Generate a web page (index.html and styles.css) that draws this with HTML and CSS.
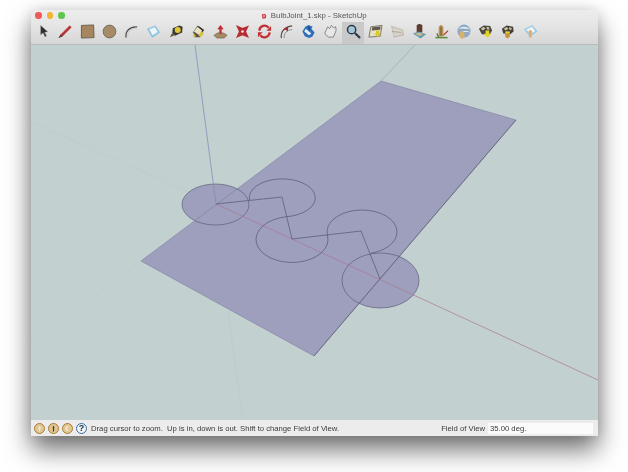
FILE: index.html
```html
<!DOCTYPE html>
<html lang="en">
<head>
<meta charset="utf-8">
<title>BulbJoint_1.skp - SketchUp</title>
<link rel="stylesheet" href="styles.css">
</head>
<body>
<main class="window">
  <header class="chrome">
    <div class="titlebar">
      <div class="lights"><span class="light red"></span><span class="light yellow"></span><span class="light green"></span></div>
      <div class="title">
        <svg class="docicon" viewBox="0 0 8 8"><path d="M1 2 5 1 7 3 6.5 7 2 7.5Z" fill="#d2404a"/><path d="M3 3h2v2H3Z" fill="#f3c9c9"/></svg>
        <span>BulbJoint_1.skp - SketchUp</span>
      </div>
    </div>
    <div class="toolbar">
      <span class="tool"><svg viewBox="0 0 16 16"><path d="M5 1.5v10l2.6-2.2 2 4.2 1.6-.8-2-4 3.2-.4Z" fill="#2b2b30" stroke="#888" stroke-width=".5"/></svg></span>
      <span class="tool"><svg viewBox="0 0 16 16"><path d="M0.5 15 3 11 12.5 1.5l2 2L5 13Z" fill="#b5323a"/><path d="M.5 15 3 11l2 2Z" fill="#50403a"/><path d="M3 11 12.5 1.5" stroke="#e58a8a" stroke-width=".8"/></svg></span>
      <span class="tool"><svg viewBox="0 0 16 16"><path d="M1.5 1.5 14.5 1 15 14.5 1.5 15Z" fill="#a5865f" stroke="#5f5648" stroke-width=".9"/></svg></span>
      <span class="tool"><svg viewBox="0 0 16 16"><circle cx="8" cy="8" r="6.8" fill="#a78b66" stroke="#6b6254" stroke-width=".9"/></svg></span>
      <span class="tool"><svg viewBox="0 0 16 16"><path d="M2.2 14.5C1 8 6 2.5 14 3" fill="none" stroke="#4d4d4f" stroke-width="1.3"/><path d="M4 13C3.5 8.5 7 4.4 14 4.4" fill="none" stroke="#c8c8c8" stroke-width="1"/></svg></span>
      <span class="tool"><svg viewBox="0 0 16 16"><path d="M1 5 10 1.5 15 9 6.5 15Z" fill="#8fc4e0"/><path d="M3.5 5.6 9.5 3.5 12.5 8.5 7 12Z" fill="#eef6fa"/></svg></span>
      <span class="tool"><svg viewBox="0 0 16 16"><path d="M1 14 3 10 6 12Z" fill="#6a5a30"/><path d="M4 4.5 11 1.5 14.5 3 14 9 6.5 12.5 3.5 10Z" fill="#3a3a34"/><circle cx="9.3" cy="6.3" r="3.2" fill="#e5c53a"/></svg></span>
      <span class="tool"><svg viewBox="0 0 16 16"><path d="M2 9 7 1.5 14 6 10 14 4 14Z" fill="#57534a"/><path d="M3 8 7 3 12 6.5 9 12Z" fill="#e8e2bf"/><path d="M2 8.5 5.5 13 2.5 13.5Z" fill="#d8c42f"/><path d="M8 3 13 7" stroke="#2b2b2b" stroke-width="1.3"/><path d="M8 12 11 8 14 10 10 14Z" fill="#d9c538"/></svg></span>
      <span class="tool"><svg viewBox="0 0 16 16"><path d="M1 12 5 9.5h6L15 12 12 15H4Z" fill="#a58a66" stroke="#5e5244" stroke-width=".6"/><path d="M8 1 4.6 5.6H6.8V10.5H9.2V5.6H11.4Z" fill="#c42b2f"/></svg></span>
      <span class="tool"><svg viewBox="0 0 16 16"><path d="M1 1 7.5 4 8.5 4 15 1.5 12 7.5V8.5L15 15 8.5 12.2H7.5L1 15 4 8.5V7.5Z" fill="#b72a32"/><circle cx="8" cy="8" r="1.4" fill="#e8e8e8"/></svg></span>
      <span class="tool"><svg viewBox="0 0 16 16"><path d="M2.5 7A5.6 5.6 0 0 1 12.5 4" fill="none" stroke="#c42f34" stroke-width="2.4"/><path d="M13.5 9A5.6 5.6 0 0 1 3.5 12" fill="none" stroke="#c42f34" stroke-width="2.4"/><path d="M15 2v5.2H10ZM1 14V8.8H6Z" fill="#c42f34"/></svg></span>
      <span class="tool"><svg viewBox="0 0 16 16"><path d="M2.5 15C1.5 8 6 3 14 2" fill="none" stroke="#4a4a4a" stroke-width="1.2"/><path d="M5.5 15C5 10 8 6.5 14 6" fill="none" stroke="#8a8a8a" stroke-width="1"/><path d="M3.5 7 10 2.5 9.5 8 7 6.2Z" fill="#ad2a32"/></svg></span>
      <span class="tool"><svg viewBox="0 0 16 16"><path d="M8 1 12.5 3 11 5 14.5 9 12 13.5 8.5 15 4 13 1.5 8 4.5 3Z" fill="#2e6fb8"/><path d="M5 5 11 10 8.5 12 3.5 8Z" fill="#e9eef2"/><path d="M8 3 9.5 6" stroke="#1d3f6e" stroke-width="1.2"/></svg></span>
      <span class="tool"><svg viewBox="0 0 16 16"><path d="M2 9.5 5 3 7 5 9 1.5 11 4 13.5 3 14 7 11 14H6L2.5 11Z" fill="#e7e7e5" stroke="#77777a" stroke-width=".9"/></svg></span>
      <span class="tool active"><svg viewBox="0 0 16 16"><circle cx="6" cy="6" r="4.4" fill="#a7c5d8" stroke="#2b3a48" stroke-width="1.6"/><path d="M9.5 9.5 15 15" stroke="#2b3a48" stroke-width="2.3"/></svg></span>
      <span class="tool"><svg viewBox="0 0 16 16"><path d="M3 3 15 1.5 13 13 1 14Z" fill="#e6e0c4" stroke="#6b6555" stroke-width=".9"/><path d="M4.5 3.5 13.5 2.6 13 6 4 6.8Z" fill="#5d5a52"/><path d="M8.5 7h3.5v3h2L10.2 14 6.7 10h1.8Z" fill="#d8cb2c"/></svg></span>
      <span class="tool"><svg viewBox="0 0 16 16"><path d="M1 1.5 14 6 15 12 4 15Z" fill="#c4bcb0"/><path d="M2.5 3.5 13 7 13 11 4.5 13Z" fill="#d8d3cb"/><path d="M2 8 12 9" stroke="#aaa397" stroke-width="1"/></svg></span>
      <span class="tool"><svg viewBox="0 0 16 16"><path d="M5 1h6v8H5Z" fill="#5f3c2d"/><path d="M5 1 8 0 11 1" fill="#3f2a20"/><path d="M1 10 7 8 15 11 9 15.5Z" fill="#5d9ab0"/><path d="M3 10.5 8 9 12 11 8 13Z" fill="#c9b98a"/></svg></span>
      <span class="tool"><svg viewBox="0 0 16 16"><path d="M5 3 7.5 .8 10 3V13H5Z" fill="#b89358"/><path d="M7.5 3V13" stroke="#7d5b33" stroke-width="1.2"/><path d="M1.5 14.5h13" stroke="#5b8a3a" stroke-width="1.6"/><path d="M10 12 15 7" stroke="#b03a32" stroke-width="1.2"/><path d="M3 10 5 14" stroke="#48702f" stroke-width="1.2"/></svg></span>
      <span class="tool"><svg viewBox="0 0 16 16"><circle cx="8.5" cy="7.5" r="7" fill="#8ea9c8"/><path d="M2.5 5C6 2 11 2 15 5.5 11 4.5 6 4.5 2.5 5ZM5 9C8 7 12 7 15 9 11 8.5 8 8.5 5 9Z" fill="#e6edf2"/><path d="M4 8h5v6l-2.5 2L4 14Z" fill="#d8b06c"/></svg></span>
      <span class="tool"><svg viewBox="0 0 16 16"><path d="M1 5 6 1.5 13 2 15 7 12 12 4 11Z" fill="#49463f"/><path d="M3 5 6 3 8 5 5 7ZM9 3 12 3.5 12 6 9.5 5.5Z" fill="#c9c0a5"/><path d="M8 7h4v3.5h2.4L10 15 5.6 10.5H8Z" fill="#e2d42e"/></svg></span>
      <span class="tool"><svg viewBox="0 0 16 16"><path d="M2 5 7 1.5 14 3 14.5 8 11 11 3.5 10Z" fill="#45423b"/><path d="M4 5 7 3.2 9 5 6 7ZM9.5 3.5 12.5 4.2 12 6.5 10 6Z" fill="#c9c0a5"/><path d="M5.5 8h5v5.5L8 15.5 5.5 13.5Z" fill="#c9923e"/><path d="M6 8h4v2H6Z" fill="#e2d42e"/></svg></span>
      <span class="tool"><svg viewBox="0 0 16 16"><path d="M1 5.5 10 1 15.5 8 7 13.5Z" fill="#9acae4"/><path d="M3.5 5.8 9.5 3 13 7.6 7.5 11Z" fill="#f0f6fa"/><path d="M5 9 7.8 5.8 10.6 9H9.2V14.5H6.4V9Z" fill="#d9b070"/></svg></span>
    </div>
  </header>
  <svg class="canvas" viewBox="31 45 567 375" role="img" aria-label="Model viewport">
    <g class="scene">
      <path class="axis-faint red" d="M31 122 216 204"/>
      <path class="axis-faint green" d="M31 343 141 261"/>
      <path class="axis-faint blue" d="M228 312 243 420"/>
      <path class="axis green" d="M381 81 415 45"/>
      <path class="plane" d="M381 81 516 120 314 356 141 261Z"/>
      <ellipse class="bulb" cx="215.5" cy="204.5" rx="33.5" ry="20.5"/>
      <ellipse class="bulb" cx="380.5" cy="280.5" rx="38.5" ry="27.5"/>
      <path class="edge" d="M141 261 381 81 516 120 314 356Z"/>
      <path class="axis blue" d="M195 45 216 204"/>
      <path class="axis red" d="M216 204 598 380"/>
      <path class="curve" d="M249.5 200A33 19 0 1 1 286.7 216.7"/>
      <path class="curve" d="M286.7 216.7A36 23 0 1 0 327.6 236"/>
      <path class="curve" d="M327.6 236A35 22 0 1 1 370.7 253.3"/>
      <path class="curve" d="M216 204 282 197 292 239 361 231 380 279"/>
      <path class="curve" d="M314 356 516 120"/>
    </g>
  </svg>
  <footer class="statusbar">
    <div class="badges">
      <span class="badge orange"><svg viewBox="0 0 12 12"><path d="M6 2.5 8 5 6.8 7V9.5H5.2V7L4 5Z" fill="#f6e6c6"/></svg></span>
      <span class="badge orange"><svg viewBox="0 0 12 12"><path d="M6 2 7.5 5H6.8V10H5.2V5H4.5Z" fill="#4a3a20"/></svg></span>
      <span class="badge orange"><svg viewBox="0 0 12 12"><path d="M7.5 2.5A3.6 3.6 0 1 0 7.5 9.5 4.5 4.5 0 0 1 7.5 2.5Z" fill="#f6e6c6"/></svg></span>
      <span class="badge help">?</span>
    </div>
    <span class="hint">Drag cursor to zoom.&nbsp; Up is in, down is out. Shift to change Field of View.</span>
    <span class="vcb-label">Field of View</span>
    <span class="vcb">35.00 deg.</span>
  </footer>
</main>
</body>
</html>
```
FILE: styles.css
```css
* { box-sizing: border-box; }
html, body { margin: 0; height: 100%; background: #fff; overflow: hidden; }
body { padding: 10px 0 0 31px; font-family: "Liberation Sans", Arial, sans-serif; color: #333; }
.window {
  width: 567px; height: 426px; display: flex; flex-direction: column;
  border-radius: 4px 4px 0 0; background: #e8e8e8;
  box-shadow: 0 14px 26px rgba(0,0,0,.55), 0 0 14px rgba(0,0,0,.12);
}
.chrome {
  height: 35px; flex: none; border-radius: 4px 4px 0 0; border-bottom: 1px solid #b9bcbc;
  background: linear-gradient(#ededed, #e6e6e6 40%, #d6d6d6);
}
.titlebar { height: 12px; display: flex; align-items: center; padding: 0 0 1px 4px; position: relative; }
.lights { display: flex; gap: 5px; }
.light { width: 6.5px; height: 6.5px; border-radius: 50%; }
.light.red { background: #ee5a58; }
.light.yellow { background: #f2b531; }
.light.green { background: #5cc74b; }
.title {
  flex: 1; display: flex; justify-content: center; align-items: center; gap: 4px;
  font-size: 7.8px; color: #555; padding-right: 35px; filter: blur(.25px);
}
.docicon { width: 6px; height: 6px; }
.toolbar { height: 22px; display: flex; padding-left: 1.2px; }
.tool {
  width: 22.14px; height: 22px; flex: none; display: flex; align-items: center; justify-content: center;
  padding-bottom: 4px;
}
.tool svg { width: 15px; height: 15px; filter: blur(.4px); overflow: visible; }
.tool.active { background: #c9c9c9; }
.canvas { width: 567px; height: 375px; flex: none; display: block; background: #c3d0d0; }
.scene { filter: blur(.3px); }
.plane { fill: #9d9fbd; }
.bulb { fill: #9d9fbd; stroke: #5d5f78; stroke-width: .7; }
.edge { fill: none; stroke: #7e80a0; stroke-width: .6; }
.curve { fill: none; stroke: #55576f; stroke-width: .7; }
.axis { fill: none; stroke-width: .7; }
.axis.blue { stroke: #7b88b6; }
.axis.red { stroke: #a9798f; }
.axis.green { stroke: #93b0a6; }
.axis-faint { fill: none; stroke-width: .7; stroke-dasharray: 2 1; }
.axis-faint.red { stroke: #bfc5c8; }
.axis-faint.green { stroke: #bacbc7; }
.axis-faint.blue { stroke: #b8c6ca; }
.statusbar {
  flex: 1; display: flex; align-items: center; padding: 0 5px 0 3px; background: #ececec;
  font-size: 7.7px; color: #3a3a3a;
}
.badges { display: flex; gap: 3px; width: 57px; flex: none; }
.badge {
  width: 11px; height: 11px; border-radius: 50%; display: flex; align-items: center; justify-content: center;
  flex: none; filter: blur(.25px);
}
.badge svg { width: 9px; height: 9px; }
.badge.orange { border: 1.3px solid #a67c35; background: #e0c795; }
.badge.help { border: 1.3px solid #3a6f9a; background: #eef3f6; color: #234; font-size: 9px; font-weight: bold; }
.hint { flex: 1; white-space: nowrap; filter: blur(.2px); }
.vcb-label { white-space: nowrap; margin-right: 3px; filter: blur(.2px); }
.vcb { width: 105px; height: 11px; background: #fbfbfb; padding-left: 2px; line-height: 11px; filter: blur(.2px); }
```
